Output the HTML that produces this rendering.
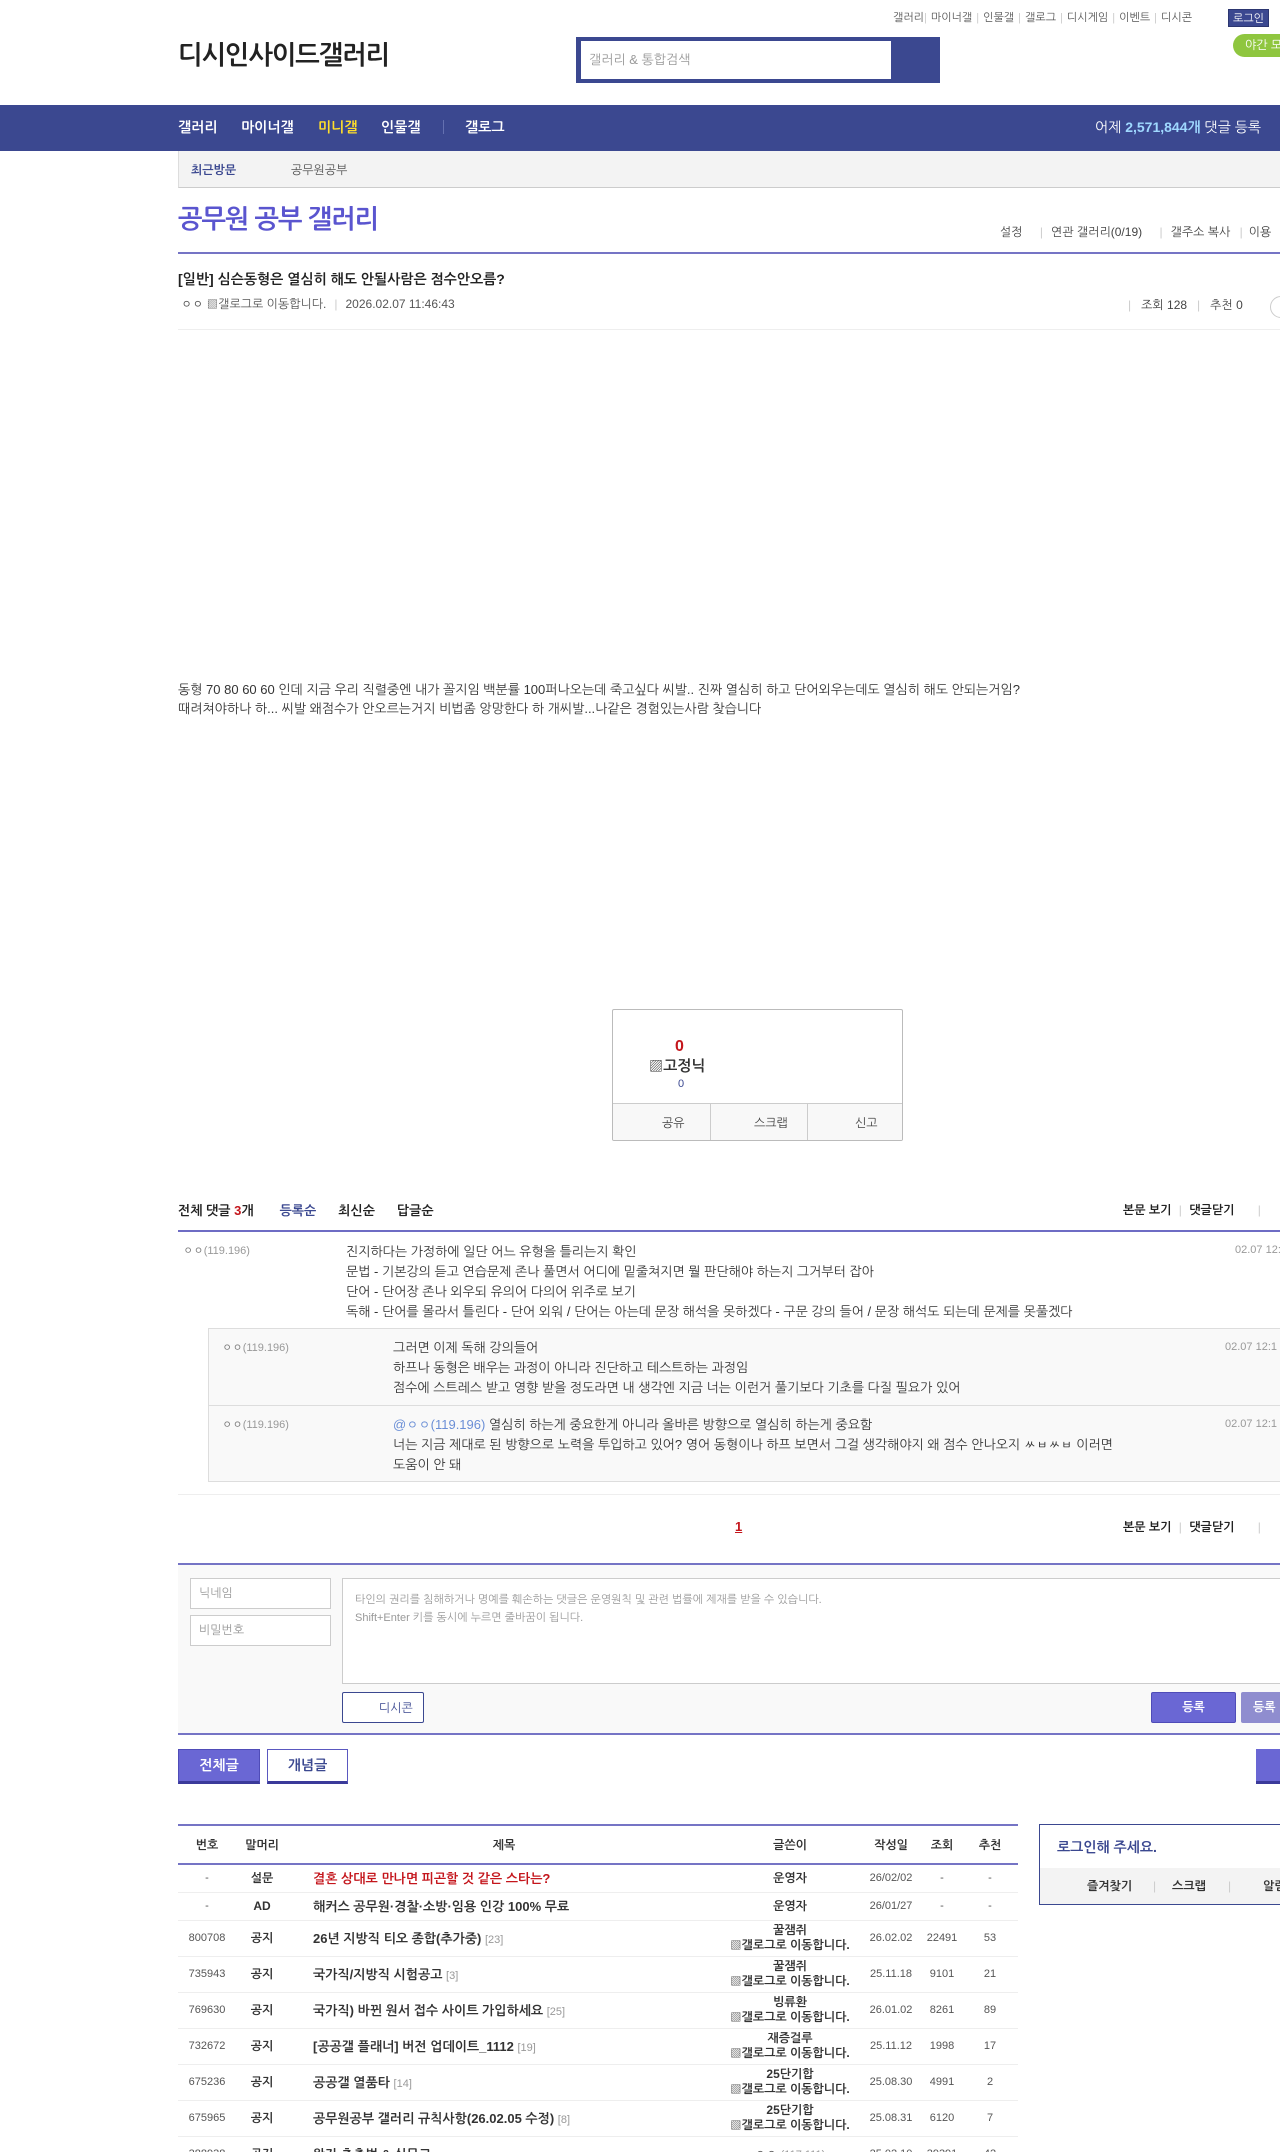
<!DOCTYPE html>
<html><head><meta charset="utf-8">
<style>
*{margin:0;padding:0;box-sizing:border-box}
html,body{width:1280px;height:2152px;overflow:hidden;background:#fff}
body{position:relative;font-family:"Liberation Sans","NanumGothic","Noto Sans CJK KR",sans-serif;color:#333;font-size:12px}
.a{position:absolute;white-space:nowrap}
.toplinks{top:11px;left:893px;font-size:11px;color:#555}
.toplinks span{margin:0 4px}
.toplinks i{color:#ccc;font-style:normal}
.login{top:9px;left:1228px;width:41px;height:18px;background:#3b4890;color:#fff;font-size:11px;text-align:center;line-height:18px;border:1px solid #2c3670}
.night{top:34px;left:1233px;width:60px;height:23px;background:#8fc63f;border-radius:12px 0 0 12px;color:#fff;font-size:12px;line-height:23px;padding-left:12px}
.logo{top:40px;left:178px;font-size:26px;font-weight:bold;color:#222;letter-spacing:-1px}
.search{top:37px;left:576px;width:364px;height:46px;background:#3b4890}
.search div{position:absolute;left:5px;top:4px;width:310px;height:38px;background:#fff;color:#999;font-size:13px;line-height:38px;padding-left:8px}
.nav{top:105px;left:0;width:1280px;height:46px;background:#3b4890}
.nav span{position:absolute;top:14px;color:#fff;font-size:14px;font-weight:bold}
.sub{top:151px;left:178px;width:1110px;height:37px;background:#f3f3f3;border-left:1px solid #ddd;border-bottom:1px solid #ccc}
.sub span{position:absolute;top:12px;font-size:12px}
.gtitle{top:204px;left:178px;font-size:26px;color:#5a55cf;font-weight:bold;letter-spacing:-1px}
.glinks{top:225px;left:1000px;font-size:12px;color:#444}
.hl{position:absolute;left:178px;width:1110px}
</style></head><body>
<div class="a toplinks">갤러리<i>|</i><span>마이너갤</span><i>|</i><span>인물갤</span><i>|</i><span>갤로그</span><i>|</i><span>디시게임</span><i>|</i><span>이벤트</span><i>|</i><span>디시콘</span></div>
<div class="a login">로그인</div>
<div class="a night">야간 모드</div>
<div class="a logo">디시인사이드갤러리</div>
<div class="a search"><div>갤러리 &amp; 통합검색</div></div>
<div class="a nav">
<span style="left:178px">갤러리</span><span style="left:241px">마이너갤</span><span style="left:318px;color:#ffde2a">미니갤</span><span style="left:381px">인물갤</span><span style="left:443px;top:15px;width:1px;height:14px;background:#6470b0"></span><span style="left:465px">갤로그</span>
<span style="left:1095px;font-weight:normal">어제 <b style="color:#9fd8ff">2,571,844개</b> 댓글 등록</span>
</div>
<div class="a sub"><span style="left:12px;color:#3b4890;font-weight:bold">최근방문</span><span style="left:112px;color:#555">공무원공부</span></div>
<div class="a gtitle">공무원 공부 갤러리</div>
<div class="a glinks">설정 <span style="color:#ccc;margin:0 8px 0 14px">|</span>연관 갤러리(0/19) <span style="color:#ccc;margin:0 8px 0 14px">|</span>갤주소 복사 <span style="color:#ccc;margin:0 6px">|</span>이용</div>
<div class="hl" style="top:252px;height:2px;background:#7574c5"></div>
<div class="a" style="top:271px;left:178px;font-size:14px;font-weight:bold;color:#222">[일반] 심슨동형은 열심히 해도 안될사람은 점수안오름?</div>
<div class="a" style="top:297px;left:181px;font-size:12px;color:#555">ㅇㅇ <span style="color:#555">▨갤로그로 이동합니다.</span><span style="color:#ccc;margin:0 8px">|</span>2026.02.07 11:46:43</div>
<div class="a" style="top:298px;left:1128px;font-size:12px;color:#444"><span style="color:#ccc;margin-right:10px">|</span>조회 128<span style="color:#ccc;margin:0 10px">|</span>추천 0</div>
<div class="a" style="top:296px;left:1270px;width:22px;height:22px;border:1px solid #ccc;border-radius:11px"></div>
<div class="hl" style="top:329px;height:1px;background:#eee"></div>
<div class="a" style="top:680px;left:178px;font-size:13px;color:#333;line-height:19px">동형 70 80 60 60 인데 지금 우리 직렬중엔 내가 꼴지임 백분률 100퍼나오는데 죽고싶다 씨발.. 진짜 열심히 하고 단어외우는데도 열심히 해도 안되는거임?<br>때려쳐야하나 하... 씨발 왜점수가 안오르는거지 비법좀 앙망한다 하 개씨발...나같은 경험있는사람 찾습니다</div>
<div class="a" style="top:1009px;left:612px;width:291px;height:132px;border:1px solid #bbb;border-radius:2px;overflow:hidden">
<div style="position:absolute;left:62px;top:28px;font-size:16px;font-weight:bold;color:#c4161c">0</div>
<div style="position:absolute;left:36px;top:48px;font-size:15px;font-weight:bold;color:#333">▨고정닉</div>
<div style="position:absolute;left:65px;top:68px;font-size:11px;color:#3b4890">0</div>
<div style="position:absolute;left:0;top:93px;width:100%;height:38px;background:#f8f8f8;border-top:1px solid #ccc;font-size:12px;color:#444">
<span style="position:absolute;left:49px;top:12px">공유</span><span style="position:absolute;left:97px;top:0;width:1px;height:38px;background:#ccc"></span>
<span style="position:absolute;left:141px;top:12px">스크랩</span><span style="position:absolute;left:194px;top:0;width:1px;height:38px;background:#ccc"></span>
<span style="position:absolute;left:242px;top:12px">신고</span></div></div>
<div class="a" style="top:1203px;left:178px;font-size:13px;font-weight:bold;color:#222">전체 댓글 <span style="color:#c4161c">3</span>개<span style="color:#3b4890;margin-left:26px">등록순</span><span style="margin-left:22px">최신순</span><span style="margin-left:22px">답글순</span></div>
<div class="a" style="top:1203px;left:1123px;font-size:12px;font-weight:bold;color:#222">본문 보기 <span style="color:#ccc;font-weight:normal;margin:0 4px">|</span> 댓글닫기 <span style="color:#ccc;font-weight:normal;margin-left:20px">|</span></div>
<div class="hl" style="top:1230px;height:2px;background:#6e6cc4"></div>
<div class="a" style="top:1244px;left:183px;font-size:11px;color:#777">ㅇㅇ<span style="color:#999">(119.196)</span></div>
<div class="a" style="top:1242px;left:346px;font-size:13px;line-height:20px;color:#333">진지하다는 가정하에 일단 어느 유형을 틀리는지 확인<br>문법 - 기본강의 듣고 연습문제 존나 풀면서 어디에 밑줄쳐지면 뭘 판단해야 하는지 그거부터 잡아<br>단어 - 단어장 존나 외우되 유의어 다의어 위주로 보기<br>독해 - 단어를 몰라서 틀린다 - 단어 외워 / 단어는 아는데 문장 해석을 못하겠다 - 구문 강의 들어 / 문장 해석도 되는데 문제를 못풀겠다</div>
<div class="a" style="top:1244px;left:1235px;font-size:11px;color:#999">02.07 12:</div>
<div class="a" style="top:1328px;left:208px;width:1100px;height:154px;background:#f9f9f9;border:1px solid #ddd"></div>
<div class="a" style="top:1405px;left:209px;width:1100px;height:1px;background:#ddd"></div>
<div class="a" style="top:1341px;left:222px;font-size:11px;color:#777">ㅇㅇ<span style="color:#999">(119.196)</span></div>
<div class="a" style="top:1338px;left:393px;font-size:13px;line-height:20px">그러면 이제 독해 강의들어<br>하프나 동형은 배우는 과정이 아니라 진단하고 테스트하는 과정임<br>점수에 스트레스 받고 영향 받을 정도라면 내 생각엔 지금 너는 이런거 풀기보다 기초를 다질 필요가 있어</div>
<div class="a" style="top:1341px;left:1225px;font-size:11px;color:#999">02.07 12:1</div>
<div class="a" style="top:1418px;left:222px;font-size:11px;color:#777">ㅇㅇ<span style="color:#999">(119.196)</span></div>
<div class="a" style="top:1415px;left:393px;font-size:13px;line-height:20px"><span style="color:#6b8fd6">@ㅇㅇ(119.196)</span> 열심히 하는게 중요한게 아니라 올바른 방향으로 열심히 하는게 중요함<br>너는 지금 제대로 된 방향으로 노력을 투입하고 있어? 영어 동형이나 하프 보면서 그걸 생각해야지 왜 점수 안나오지 ㅆㅂㅆㅂ 이러면<br>도움이 안 돼</div>
<div class="a" style="top:1418px;left:1225px;font-size:11px;color:#999">02.07 12:1</div>
<div class="hl" style="top:1494px;height:1px;background:#eee"></div>
<div class="a" style="top:1519px;left:735px;font-size:13px;font-weight:bold;color:#c4161c;text-decoration:underline">1</div>
<div class="a" style="top:1520px;left:1123px;font-size:12px;font-weight:bold;color:#222">본문 보기 <span style="color:#ccc;font-weight:normal;margin:0 4px">|</span> 댓글닫기 <span style="color:#ccc;font-weight:normal;margin-left:20px">|</span></div>
<div class="hl" style="top:1563px;height:172px;background:#f9f9f9;border-top:2px solid #7574c5;border-bottom:2px solid #7574c5"></div>
<div class="a" style="top:1578px;left:190px;width:141px;height:31px;background:#fff;border:1px solid #ccc;color:#999;font-size:12px;padding:7px 0 0 8px">닉네임</div>
<div class="a" style="top:1615px;left:190px;width:141px;height:31px;background:#fff;border:1px solid #ccc;color:#999;font-size:12px;padding:7px 0 0 8px">비밀번호</div>
<div class="a" style="top:1578px;left:342px;width:960px;height:106px;background:#fff;border:1px solid #ccc;color:#999;font-size:11px;line-height:18px;padding:12px 0 0 12px">타인의 권리를 침해하거나 명예를 훼손하는 댓글은 운영원칙 및 관련 법률에 제재를 받을 수 있습니다.<br>Shift+Enter 키를 동시에 누르면 줄바꿈이 됩니다.</div>
<div class="a" style="top:1692px;left:342px;width:82px;height:31px;background:#fff;border:1px solid #3b4890;border-radius:2px;color:#3b4890;font-size:12px;padding:8px 0 0 36px">디시콘</div>
<div class="a" style="top:1692px;left:1151px;width:85px;height:31px;background:#6a67d4;border:1px solid #4f4cb8;border-radius:2px;color:#fff;font-size:12px;font-weight:bold;text-align:center;line-height:29px">등록</div>
<div class="a" style="top:1692px;left:1241px;width:60px;height:31px;background:#8f8dcf;border-radius:2px;color:#fff;font-size:12px;font-weight:bold;padding:8px 0 0 12px">등록</div>
<div class="a" style="top:1749px;left:178px;width:82px;height:35px;background:#6a67d4;border:1px solid #4f4cb8;border-bottom:3px solid #3b3a9a;color:#fff;font-size:14px;font-weight:bold;text-align:center;line-height:30px">전체글</div>
<div class="a" style="top:1749px;left:267px;width:81px;height:35px;background:#fff;border:1px solid #5a58c0;border-bottom:3px solid #3b3a9a;color:#3b4890;font-size:14px;font-weight:bold;text-align:center;line-height:30px">개념글</div>
<div class="a" style="top:1749px;left:1256px;width:40px;height:35px;background:#6a67d4;border-bottom:3px solid #3b3a9a"></div>
<style>
table{position:absolute;left:178px;top:1824px;width:840px;border-collapse:collapse;table-layout:fixed;font-size:11px;color:#555}
th{height:39px;border-top:2px solid #7574c5;border-bottom:2px solid #7574c5;font-size:12px;font-weight:bold;color:#333}
td{border-bottom:1px solid #eee;text-align:center;height:36px}
td.t{text-align:left;padding-left:25px;font-size:13px;font-weight:bold;color:#333}
td.t em{font-style:normal;font-weight:normal;color:#999;font-size:11px}
td.m{font-size:12px;font-weight:bold;color:#333}
td.w{font-size:12px;font-weight:bold;color:#333;line-height:15px}
tr.s td{height:28px}
</style>
<table>
<colgroup><col style="width:58px"><col style="width:52px"><col style="width:432px"><col style="width:140px"><col style="width:62px"><col style="width:40px"><col style="width:56px"></colgroup>
<tr><th>번호</th><th>말머리</th><th>제목</th><th>글쓴이</th><th>작성일</th><th>조회</th><th>추천</th></tr>
<tr class="s"><td>-</td><td class="m">설문</td><td class="t" style="color:#c4161c">결혼 상대로 만나면 피곤할 것 같은 스타는?</td><td class="w">운영자</td><td>26/02/02</td><td>-</td><td>-</td></tr>
<tr class="s"><td>-</td><td class="m">AD</td><td class="t">해커스 공무원·경찰·소방·임용 인강 100% 무료</td><td class="w">운영자</td><td>26/01/27</td><td>-</td><td>-</td></tr>
<tr><td>800708</td><td class="m">공지</td><td class="t">26년 지방직 티오 종합(추가중) <em>[23]</em></td><td class="w">꿀잼쥐<br>▨갤로그로 이동합니다.</td><td>26.02.02</td><td>22491</td><td>53</td></tr>
<tr><td>735943</td><td class="m">공지</td><td class="t">국가직/지방직 시험공고 <em>[3]</em></td><td class="w">꿀잼쥐<br>▨갤로그로 이동합니다.</td><td>25.11.18</td><td>9101</td><td>21</td></tr>
<tr><td>769630</td><td class="m">공지</td><td class="t">국가직) 바뀐 원서 접수 사이트 가입하세요 <em>[25]</em></td><td class="w">빙류환<br>▨갤로그로 이동합니다.</td><td>26.01.02</td><td>8261</td><td>89</td></tr>
<tr><td>732672</td><td class="m">공지</td><td class="t">[공공갤 플래너] 버전 업데이트_1112 <em>[19]</em></td><td class="w">재증걸루<br>▨갤로그로 이동합니다.</td><td>25.11.12</td><td>1998</td><td>17</td></tr>
<tr><td>675236</td><td class="m">공지</td><td class="t">공공갤 열품타 <em>[14]</em></td><td class="w">25단기합<br>▨갤로그로 이동합니다.</td><td>25.08.30</td><td>4991</td><td>2</td></tr>
<tr><td>675965</td><td class="m">공지</td><td class="t">공무원공부 갤러리 규칙사항(26.02.05 수정) <em>[8]</em></td><td class="w">25단기합<br>▨갤로그로 이동합니다.</td><td>25.08.31</td><td>6120</td><td>7</td></tr>
<tr><td>388938</td><td class="m">공지</td><td class="t">왕자 추출법 &amp; 실무고</td><td style="font-size:12px">ㅇㅇ <span style="color:#999;font-size:11px">(117.111)</span></td><td>25.02.10</td><td>39391</td><td>42</td></tr>
</table>
<div class="a" style="top:1824px;left:1039px;width:260px;height:81px;border:1px solid #3b4890;border-bottom:2px solid #3b4890">
<div style="position:absolute;left:17px;top:14px;font-size:14px;font-weight:bold;color:#3b4890">로그인해 주세요.</div>
<div style="position:absolute;left:0;top:43px;width:100%;height:36px;background:#f3f3f3;font-size:12px;font-weight:bold;color:#333">
<span style="position:absolute;left:47px;top:11px">즐겨찾기</span><span style="position:absolute;left:113px;top:11px;color:#ccc;font-weight:normal">|</span><span style="position:absolute;left:132px;top:11px">스크랩</span><span style="position:absolute;left:188px;top:11px;color:#ccc;font-weight:normal">|</span><span style="position:absolute;left:223px;top:11px">알림</span></div></div>
</body></html>
